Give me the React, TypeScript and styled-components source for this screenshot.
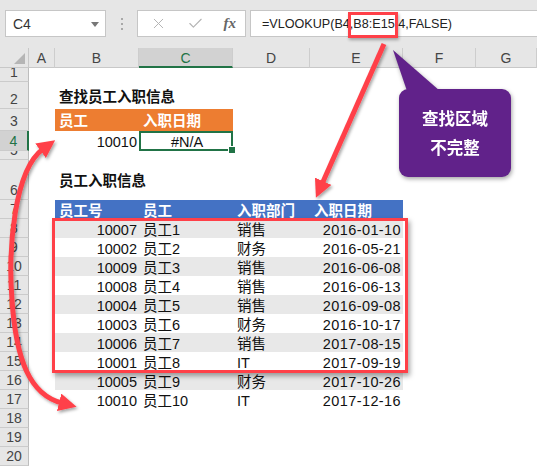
import React from "react";
import styled, { createGlobalStyle, css } from "styled-components";
import { X, Check } from "lucide-react";

const Global = createGlobalStyle`
  html, body { margin: 0; padding: 0; background: #ffffff; }
  body { font-family: "Liberation Sans", "Noto Sans CJK SC", sans-serif; }
  * { box-sizing: border-box; }
`;

const GREEN = "#217346";
const RED = "#ff4048";
const COLS = "29px 26px 84px 94px 77px 93px 73px 1fr";

const Page = styled.div`
  position: relative;
  width: 537px;
  height: 466px;
  overflow: hidden;
  background: #ffffff;
  display: flex;
  flex-direction: column;
`;

const Toolbar = styled.div`
  height: 48px;
  flex: none;
  background: #e6e6e6;
  display: flex;
  align-items: flex-start;
  padding: 10px 0 0 5px;
`;

const NameBox = styled.div`
  width: 101px;
  height: 27px;
  background: #fff;
  border: 1px solid #c6c6c6;
  display: flex;
  align-items: center;
  justify-content: space-between;
  padding: 1px 6px 0 7px;
  font-size: 14px;
  color: #333;
`;

const DropTri = styled.span`
  width: 0;
  height: 0;
  border-left: 4px solid transparent;
  border-right: 4px solid transparent;
  border-top: 5px solid #777;
`;

const Grip = styled.div`
  width: 31px;
  height: 27px;
  display: flex;
  flex-direction: column;
  align-items: center;
  justify-content: center;
  gap: 3px;
`;

const GripDot = styled.span`
  width: 2px;
  height: 2px;
  background: #a8a8a8;
`;

const FxButtons = styled.div`
  width: 109px;
  height: 27px;
  background: #fff;
  border: 1px solid #c6c6c6;
  display: flex;
  align-items: center;
  justify-content: space-between;
  padding: 0 9px 0 12px;
  color: #b4b4b4;
`;

const Fx = styled.span`
  font-family: "Liberation Serif", serif;
  font-style: italic;
  font-weight: bold;
  font-size: 15px;
  color: #666;
`;

const FormulaInput = styled.div`
  margin-left: 4px;
  flex: 1;
  height: 27px;
  background: #fff;
  border: 1px solid #c6c6c6;
  border-right: none;
  display: flex;
  align-items: center;
  padding: 1px 0 0 11px;
  font-size: 12.6px;
  color: #222;
  white-space: nowrap;
`;

const Sheet = styled.div`
  flex: 1;
  display: flex;
  flex-direction: column;
`;

const SheetRow = styled.div<{ $h: number }>`
  display: grid;
  grid-template-columns: ${COLS};
  height: ${(p) => p.$h}px;
  flex: none;
`;

const Corner = styled.div`
  background: #e6e6e6;
  border-right: 1px solid #c8c8c8;
  border-bottom: 1px solid #c8c8c8;
  position: relative;
  &::after {
    content: "";
    position: absolute;
    right: 3px;
    bottom: 3px;
    width: 11px;
    height: 11px;
    background: #b5b5b5;
    clip-path: polygon(100% 0, 100% 100%, 0 100%);
  }
`;

const ColHead = styled.div<{ $active?: boolean }>`
  background: ${(p) => (p.$active ? "#d2d2d2" : "#e6e6e6")};
  border-right: 1px solid #cdcdcd;
  border-bottom: ${(p) => (p.$active ? `2px solid ${GREEN}` : "1px solid #c8c8c8")};
  color: ${(p) => (p.$active ? GREEN : "#444")};
  font-size: 14px;
  display: flex;
  align-items: center;
  justify-content: center;
  padding-top: ${(p) => (p.$active ? 2 : 1)}px;
`;

const RowHead = styled.div<{ $active?: boolean; $clip?: boolean }>`
  background: ${(p) => (p.$active ? "#d2d2d2" : "#e6e6e6")};
  border-bottom: 1px solid #cbcbcb;
  border-right: ${(p) => (p.$active ? `2px solid ${GREEN}` : "1px solid #bdbdbd")};
  color: ${(p) => (p.$active ? GREEN : "#444")};
  font-size: 14px;
  line-height: 13px;
  display: flex;
  align-items: flex-end;
  justify-content: center;
  padding-bottom: 2px;
  overflow: ${(p) => (p.$clip ? "hidden" : "visible")};
`;

type Align = "left" | "right" | "center";

const Cell = styled.div<{
  $bg?: string;
  $align?: Align;
  $bold?: boolean;
  $color?: string;
  $selected?: boolean;
  $spaced?: boolean;
}>`
  position: relative;
  background: ${(p) => p.$bg || "transparent"};
  color: ${(p) => p.$color || "#111"};
  font-size: 14.5px;
  line-height: 16px;
  font-weight: ${(p) => (p.$bold ? 700 : 400)};
  display: flex;
  align-items: center;
  justify-content: ${(p) =>
    p.$align === "right" ? "flex-end" : p.$align === "center" ? "center" : "flex-start"};
  padding: 2px 2px 0 4px;
  white-space: nowrap;
  letter-spacing: ${(p) => (p.$spaced ? "0.4px" : "0")};
  ${(p) =>
    p.$selected &&
    css`
      box-shadow: inset 0 0 0 2px ${GREEN};
      &::after {
        content: "";
        position: absolute;
        right: -3px;
        bottom: -3px;
        width: 6px;
        height: 6px;
        background: ${GREEN};
        border: 1px solid #fff;
      }
    `}
`;

const RangeMark = styled.div`
  position: absolute;
  left: 348px;
  top: 12px;
  width: 50px;
  height: 26px;
  border: 3px solid ${RED};
  box-shadow: 1px 2px 3px rgba(0, 0, 0, 0.3);
`;

const TableMark = styled.div`
  position: absolute;
  left: 52px;
  top: 218px;
  width: 356px;
  height: 155px;
  border: 3px solid ${RED};
  box-shadow: 2px 3px 5px rgba(0, 0, 0, 0.35);
`;

const Callout = styled.div`
  position: absolute;
  left: 399px;
  top: 89px;
  width: 112px;
  height: 88px;
  background: #61228a;
  border-radius: 9px;
  filter: drop-shadow(1px 2px 2px rgba(0, 0, 0, 0.35));
  color: #fff;
  font-family: "Noto Sans CJK SC", sans-serif;
  font-weight: 700;
  font-size: 16.5px;
  line-height: 29px;
  display: flex;
  flex-direction: column;
  align-items: center;
  justify-content: center;
  &::before {
    content: "";
    position: absolute;
    left: -6px;
    top: -39px;
    width: 47px;
    height: 41px;
    background: #61228a;
    clip-path: polygon(0 0, 14px 41px, 47px 41px);
  }
`;

const ArrowLayer = styled.svg`
  position: absolute;
  left: 0;
  top: 0;
  pointer-events: none;
`;

const employees: [string, string, string, string][] = [
  ["10007", "员工1", "销售", "2016-01-10"],
  ["10002", "员工2", "财务", "2016-05-21"],
  ["10009", "员工3", "销售", "2016-06-08"],
  ["10008", "员工4", "销售", "2016-06-13"],
  ["10004", "员工5", "销售", "2016-09-08"],
  ["10003", "员工6", "财务", "2016-10-17"],
  ["10006", "员工7", "销售", "2017-08-15"],
  ["10001", "员工8", "IT", "2017-09-19"],
  ["10005", "员工9", "财务", "2017-10-26"],
  ["10010", "员工10", "IT", "2017-12-16"],
];

const ORANGE = "#ed7d31";
const BLUE = "#4472c4";
const STRIPE = "#e8e8e8";

const Blank = () => <Cell />;

export default function App() {
  const letters = ["A", "B", "C", "D", "E", "F", "G"];
  return (
    <>
      <Global />
      <Page>
        <Toolbar>
          <NameBox>
            C4
            <DropTri />
          </NameBox>
          <Grip>
            <GripDot />
            <GripDot />
            <GripDot />
          </Grip>
          <FxButtons>
            <X size={17} strokeWidth={1.4} />
            <Check size={17} strokeWidth={1.6} />
            <Fx>fx</Fx>
          </FxButtons>
          <FormulaInput>=VLOOKUP(B4,B8:E15,4,FALSE)</FormulaInput>
        </Toolbar>
        <Sheet>
          <SheetRow $h={18}>
            <Corner />
            {letters.map((l) => (
              <ColHead key={l} $active={l === "C"}>
                {l}
              </ColHead>
            ))}
          </SheetRow>
          <SheetRow $h={16}>
            <RowHead>1</RowHead>
            <Blank /><Blank /><Blank /><Blank /><Blank /><Blank /><Blank />
          </SheetRow>
          <SheetRow $h={27}>
            <RowHead>2</RowHead>
            <Blank />
            <Cell $bold>查找员工入职信息</Cell>
            <Blank /><Blank /><Blank /><Blank /><Blank />
          </SheetRow>
          <SheetRow $h={22}>
            <RowHead>3</RowHead>
            <Blank />
            <Cell $bg={ORANGE} $bold $color="#fff">员工</Cell>
            <Cell $bg={ORANGE} $bold $color="#fff">入职日期</Cell>
            <Blank /><Blank /><Blank /><Blank />
          </SheetRow>
          <SheetRow $h={20}>
            <RowHead $active>4</RowHead>
            <Blank />
            <Cell $align="right">10010</Cell>
            <Cell $align="center" $selected>#N/A</Cell>
            <Blank /><Blank /><Blank /><Blank />
          </SheetRow>
          <SheetRow $h={9}>
            <RowHead $clip>5</RowHead>
            <Blank /><Blank /><Blank /><Blank /><Blank /><Blank /><Blank />
          </SheetRow>
          <SheetRow $h={40}>
            <RowHead>6</RowHead>
            <Blank />
            <Cell $bold>员工入职信息</Cell>
            <Blank /><Blank /><Blank /><Blank /><Blank />
          </SheetRow>
          <SheetRow $h={19}>
            <RowHead>7</RowHead>
            <Blank />
            <Cell $bg={BLUE} $bold $color="#fff">员工号</Cell>
            <Cell $bg={BLUE} $bold $color="#fff">员工</Cell>
            <Cell $bg={BLUE} $bold $color="#fff">入职部门</Cell>
            <Cell $bg={BLUE} $bold $color="#fff">入职日期</Cell>
            <Blank /><Blank />
          </SheetRow>
          {employees.map(([id, name, dept, date], i) => {
            const bg = i % 2 === 0 ? STRIPE : "#fff";
            return (
              <SheetRow $h={19} key={id + name}>
                <RowHead>{i + 8}</RowHead>
                <Blank />
                <Cell $bg={bg} $align="right">{id}</Cell>
                <Cell $bg={bg}>{name}</Cell>
                <Cell $bg={bg}>{dept}</Cell>
                <Cell $bg={bg} $align="right" $spaced>{date}</Cell>
                <Blank /><Blank />
              </SheetRow>
            );
          })}
          {[18, 19, 20].map((n) => (
            <SheetRow $h={19} key={n}>
              <RowHead>{n}</RowHead>
              <Blank /><Blank /><Blank /><Blank /><Blank /><Blank /><Blank />
            </SheetRow>
          ))}
        </Sheet>

        <RangeMark />
        <TableMark />
        <Callout>
          <span>查找区域</span>
          <span>不完整</span>
        </Callout>
        <ArrowLayer width={537} height={466} viewBox="0 0 537 466">
          <defs>
            <marker
              id="ah"
              markerUnits="userSpaceOnUse"
              markerWidth="18"
              markerHeight="18"
              refX="3"
              refY="9"
              orient="auto-start-reverse"
            >
              <path d="M0,0 L18,9 L0,18 z" fill={RED} />
            </marker>
            <filter id="sh" x="-20%" y="-20%" width="140%" height="140%">
              <feDropShadow dx="1.5" dy="2" stdDeviation="1.5" floodOpacity="0.35" />
            </filter>
          </defs>
          <g filter="url(#sh)">
            <path d="M384,44 L322,184" stroke={RED} strokeWidth="5" fill="none" markerEnd="url(#ah)" />
            <path
              d="M43,149 C14,170 8,250 12,300 C16,360 30,395 62,403"
              fill="none"
              stroke={RED}
              strokeWidth="5"
              markerStart="url(#ah)"
              markerEnd="url(#ah)"
            />
          </g>
        </ArrowLayer>
      </Page>
    </>
  );
}
